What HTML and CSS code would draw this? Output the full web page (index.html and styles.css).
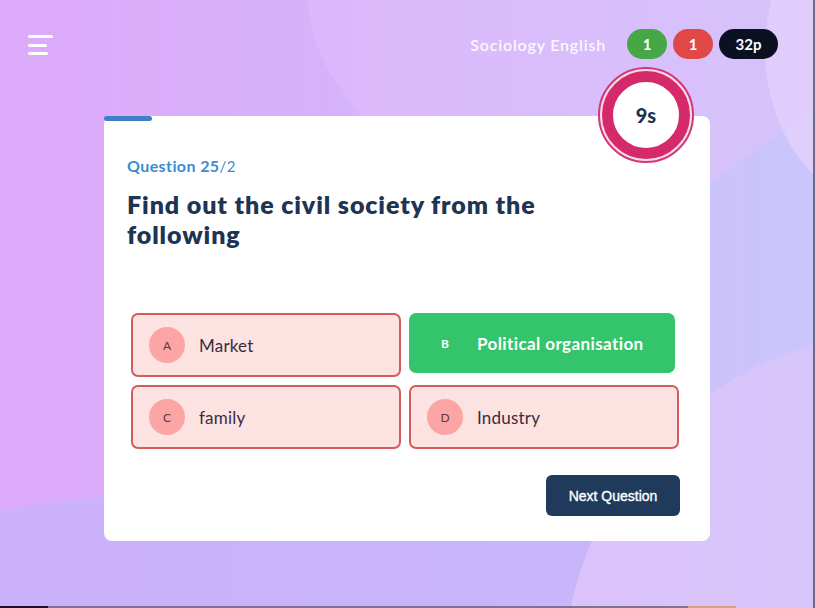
FILE: index.html
```html
<!DOCTYPE html>
<html>
<head>
<meta charset="utf-8">
<link rel="stylesheet" href="styles.css">
</head>
<body>
<div class="bg">
  <div class="blob blob-wedge"></div>
  <div class="blob blob-tr"></div>
  <div class="blob blob-bl"></div>
  <div class="blob blob-br"></div>
</div>
<div class="page">
  <header class="topbar">
    <button class="menu" aria-label="menu">
      <span class="l1"></span><span class="l2"></span><span class="l3"></span>
    </button>
    <div class="stats">
      <span class="subject">Sociology English</span>
      <span class="pill pill-green">1</span>
      <span class="pill pill-red">1</span>
      <span class="pill pill-dark">32p</span>
    </div>
  </header>

  <main class="card">
    <div class="progress"></div>
    <div class="timer"><div class="timer-inner">9s</div></div>
    <div class="qnum">Question 25<span class="total">/2</span></div>
    <h1 class="question">Find out the civil society from the following</h1>
    <div class="options">
      <div class="opt wrong"><span class="letter">A</span><span class="label">Market</span></div>
      <div class="opt correct"><span class="letter">B</span><span class="label">Political organisation</span></div>
      <div class="opt wrong"><span class="letter">C</span><span class="label">family</span></div>
      <div class="opt wrong"><span class="letter">D</span><span class="label">Industry</span></div>
    </div>
    <div class="actions">
      <button class="next">Next Question</button>
    </div>
  </main>
</div>
<div class="edge-bottom"><span class="seg1"></span><span class="seg2"></span><span class="seg3"></span></div>
<div class="edge-right"></div>
</body>
</html>
```

FILE: styles.css
```css
* { box-sizing: border-box; }
html, body { margin: 0; padding: 0; }
body {
  width: 815px;
  height: 608px;
  overflow: hidden;
  position: relative;
  font-family: Lato, "Noto Sans", sans-serif;
  background: linear-gradient(90deg, #dcaaf9 0%, #d8b0fa 35%, #d2bafa 60%, #c9c6fb 100%);
}
.bg { position: absolute; inset: 0; overflow: hidden; z-index: 0; }
.blob { position: absolute; border-radius: 50%; }
.blob-wedge {
  width: 700px; height: 500px;
  left: 300px; top: -330px;
  background: rgba(234, 192, 252, 0.35);
  transform: rotate(-35deg);
  border-radius: 40%;
}
.blob-tr {
  width: 260px; height: 320px;
  left: 765px; top: -110px;
  background: rgba(226, 206, 252, 0.9);
}
.blob-bl {
  width: 1400px; height: 900px;
  left: -400px; top: 485px;
  background: linear-gradient(90deg, #cdaefa, #c6b8fb);
  border-radius: 50% 50% 0 0 / 30% 30% 0 0;
}
.blob-br {
  width: 700px; height: 700px;
  left: 563px; top: 330px;
  background: linear-gradient(90deg, #dcc2fa, #d0ccfc);
}
.page { position: relative; z-index: 1; }

.topbar {
  display: flex;
  justify-content: space-between;
  align-items: center;
  padding: 29px 37px 0 28px;
  height: 59px;
}
.menu {
  border: 0; background: none; padding: 0;
  width: 26px; height: 20px;
  display: flex; flex-direction: column; justify-content: space-between;
  margin-top: 2px;
}
.menu span { display: block; height: 3px; background: #fff; border-radius: 2px; }
.menu .l1 { width: 25px; }
.menu .l2 { width: 19px; }
.menu .l3 { width: 20px; }
.stats { display: flex; align-items: center; gap: 6px; }
.subject {
  color: rgba(255,255,255,0.92);
  font-size: 16px;
  font-weight: 600;
  letter-spacing: 0.8px;
  margin-right: 15px;
}
.pill {
  height: 30px;
  min-width: 40px;
  padding: 0 13px;
  border-radius: 15px;
  color: #fff;
  font-weight: 700;
  font-size: 15px;
  display: inline-flex; align-items: center; justify-content: center;
}
.pill-green { background: #46a746; }
.pill-red { background: #e04747; }
.pill-dark { background: #0b1121; min-width: 59px; }

.card {
  position: relative;
  margin: 57px 0 0 104px;
  width: 606px;
  height: 425px;
  background: #fff;
  border-radius: 8px;
  padding: 42px 23px 0 23px;
}
.progress {
  position: absolute; left: 0; top: 0;
  width: 48px; height: 5px;
  background: #3f7fc4;
  border-radius: 3px;
}
.timer {
  position: absolute;
  left: 494px; top: -49px;
  width: 96px; height: 96px;
  border-radius: 50%;
  border: 2px solid #d8347a;
  padding: 2px;
  background: #f6dcea;
}
.timer-inner {
  width: 100%; height: 100%;
  border-radius: 50%;
  border: 11px solid #d42a6a;
  background: #fff;
  display: flex; align-items: center; justify-content: center;
  color: #1d3553;
  font-weight: 900;
  font-size: 20px;
}
.qnum {
  color: #3d8bd1;
  font-weight: 700;
  font-size: 16px;
  line-height: 16px;
  letter-spacing: 0.4px;
}
.qnum .total { font-weight: 400; font-size: 15px; }
.question {
  margin: 15px 0 0 0;
  width: 460px;
  color: #1d3553;
  font-size: 25px;
  font-weight: 800;
  line-height: 30px;
  letter-spacing: 0.9px;
}
.options {
  margin: 64px 8px 0 4px;
  display: grid;
  grid-template-columns: 270px 270px;
  grid-auto-rows: 64px;
  gap: 8px;
}
.opt {
  display: flex; align-items: center;
  border-radius: 7px;
  padding: 0 16px;
  font-size: 17px;
  letter-spacing: 0.2px;
}
.opt.wrong {
  background: #fde2e2;
  border: 2px solid #d35c5c;
  color: #3b2c3c;
}
.opt.correct {
  background: #33c46c;
  color: #fff;
  font-weight: 700;
  width: 266px; height: 60px;
  padding: 0 18px;
  letter-spacing: 0.4px;
}
.letter {
  width: 36px; height: 36px;
  border-radius: 50%;
  display: inline-flex; align-items: center; justify-content: center;
  font-size: 12px;
  margin-right: 14px;
  flex: none;
  letter-spacing: 0;
}
.wrong .letter { background: #fca5a5; color: #5b3a40; }
.correct .letter { background: transparent; color: #fff; }
.actions {
  display: flex; justify-content: flex-end;
  margin: 26px 7px 0 0;
}
.next {
  width: 134px; height: 41px;
  border: 0; border-radius: 6px;
  background: #1f3a5a;
  color: #fff;
  font-family: "Liberation Sans", Arial, sans-serif;
  font-size: 14px;
  font-weight: 400;
  -webkit-text-stroke: 0.35px #fff;
}
.edge-bottom {
  position: absolute; left: 0; bottom: 0; width: 815px; height: 2px;
  display: flex; z-index: 2;
}
.edge-bottom .seg1 { width: 48px; background: #1c1030; }
.edge-bottom .seg2 { width: 640px; background: #7c7294; }
.edge-bottom .seg3 { width: 48px; background: #d9a088; }
.edge-right {
  position: absolute; right: 0; top: 0; width: 2px; height: 608px;
  background: #6e6a86; z-index: 2;
}
```
